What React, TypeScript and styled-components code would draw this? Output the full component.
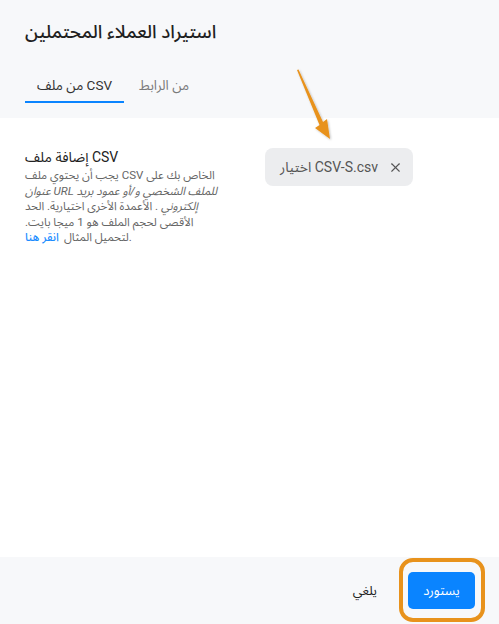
import React from "react";
import styled, { createGlobalStyle } from "styled-components";
import { X } from "lucide-react";

const Global = createGlobalStyle`
  html, body { margin: 0; padding: 0; background: #ffffff; }
  body { font-family: Roboto, "Noto Sans Arabic", "DejaVu Sans", sans-serif; }
  * { box-sizing: border-box; }
`;

const Page = styled.div`
  position: relative;
  display: flex;
  flex-direction: column;
  width: 499px;
  height: 624px;
  overflow: hidden;
  direction: ltr;
`;

const Header = styled.header`
  background: #f7f8fa;
  height: 118px;
  padding: 18px 25px 0;
`;

const Title = styled.h1`
  margin: 0;
  font-size: 18.5px;
  line-height: 28px;
  font-weight: 500;
  color: #1f1f1f;
`;

const Tabs = styled.nav`
  display: flex;
  margin-top: 29px;
`;

const Tab = styled.button<{ $active?: boolean }>`
  border: 0;
  background: none;
  padding: 0 12px 6px;
  margin: 0 3px 0 0;
  font: inherit;
  font-size: 13.5px;
  line-height: 20px;
  color: ${(p) => (p.$active ? "#333333" : "#7a7a7a")};
  border-bottom: 2px solid ${(p) => (p.$active ? "#0a84ff" : "transparent")};
  cursor: pointer;
`;

const Content = styled.main`
  flex: 1;
  background: #ffffff;
  padding: 29px 25px 0;
  display: grid;
  grid-template-columns: 200px auto;
  column-gap: 40px;
  align-items: start;
`;

const Info = styled.section`
  display: flex;
  flex-direction: column;
`;

const SectionTitle = styled.h2`
  margin: 0;
  font-size: 14px;
  line-height: 20px;
  font-weight: 400;
  color: #222222;
`;

const Description = styled.p`
  margin: 1px 0 0;
  font-size: 11.5px;
  line-height: 15.5px;
  color: #666666;
  white-space: nowrap;
`;

const Em = styled.em`
  font-style: italic;
`;

const Link = styled.a`
  display: inline-block;
  margin-right: 5px;
  color: #1a8cff;
  font-weight: 500;
  text-decoration: none;
  cursor: pointer;
`;

const FileChip = styled.div`
  justify-self: start;
  margin-top: 1px;
  display: inline-flex;
  align-items: center;
  gap: 10px;
  height: 38px;
  padding: 0 10px 0 15px;
  border-radius: 8px;
  background: #ecedef;
  color: #555555;
  font-size: 14px;
`;

const RemoveButton = styled.button`
  border: 0;
  background: none;
  padding: 0;
  display: flex;
  color: #555555;
  cursor: pointer;
`;

const Footer = styled.footer`
  height: 67px;
  background: #f7f8fa;
  display: flex;
  justify-content: flex-end;
  align-items: center;
  gap: 31px;
  padding-right: 24px;
`;

const CancelButton = styled.button`
  border: 0;
  background: none;
  padding: 0;
  font: inherit;
  font-size: 13px;
  color: #222222;
  cursor: pointer;
`;

const Highlight = styled.div`
  position: relative;
  display: flex;
  &::after {
    content: "";
    position: absolute;
    left: -9px;
    right: -10px;
    top: -14px;
    bottom: -13px;
    border: 4px solid #e8921c;
    border-radius: 14px;
    pointer-events: none;
  }
`;

const PrimaryButton = styled.button`
  width: 67px;
  height: 37px;
  border: 0;
  border-radius: 5px;
  background: #0a84ff;
  color: #ffffff;
  font: inherit;
  font-size: 13px;
  cursor: pointer;
`;

const Arrow = styled.svg`
  position: absolute;
  left: 290px;
  top: 64px;
  pointer-events: none;
`;

const RLM = "\u200F";

export default function App() {
  return (
    <>
      <Global />
      <Page>
        <Header>
          <Title>استيراد العملاء المحتملين</Title>
          <Tabs>
            <Tab $active>من ملف CSV</Tab>
            <Tab>من الرابط</Tab>
          </Tabs>
        </Header>
        <Content>
          <Info>
            <SectionTitle>إضافة ملف CSV</SectionTitle>
            <Description>
              يجب أن يحتوي ملف CSV الخاص بك على
              <br />
              <Em>عنوان URL للملف الشخصي و/أو عمود بريد</Em>
              <br />
              <Em>إلكتروني</Em> . الأعمدة الأخرى اختيارية. الحد
              <br />
              {"الأقصى لحجم الملف هو 1 ميجا بايت." + RLM}
              <br />
              <Link>انقر هنا</Link>
              <span>لتحميل المثال.</span>
            </Description>
          </Info>
          <FileChip>
            <span>اختيار CSV-S.csv</span>
            <RemoveButton aria-label="remove">
              <X size={15} strokeWidth={1.8} />
            </RemoveButton>
          </FileChip>
        </Content>
        <Footer>
          <CancelButton>يلغي</CancelButton>
          <Highlight>
            <PrimaryButton>يستورد</PrimaryButton>
          </Highlight>
        </Footer>
        <Arrow width="50" height="82" viewBox="0 0 50 82">
          <defs>
            <filter id="sh" x="-20%" y="-20%" width="140%" height="140%">
              <feDropShadow dx="1" dy="1" stdDeviation="1" floodColor="#000" floodOpacity="0.25" />
            </filter>
          </defs>
          <path
            d="M7 6 L8.5 5.5 L33 58 L37 55 L40 75 L25 64 L29.5 61 Z"
            fill="#e8921c"
            filter="url(#sh)"
          />
        </Arrow>
      </Page>
    </>
  );
}
